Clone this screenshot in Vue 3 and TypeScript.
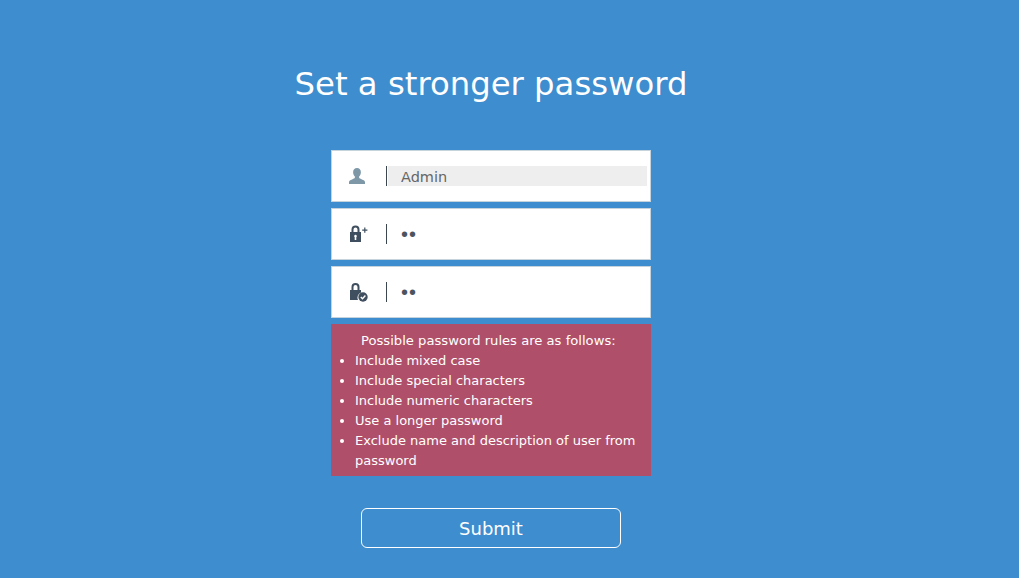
<script setup lang="ts">
const rules: string[] = [
  'Include mixed case',
  'Include special characters',
  'Include numeric characters',
  'Use a longer password',
  'Exclude name and description of user from password',
]
</script>

<template>
  <main class="page">
    <h1 class="title">Set a stronger password</h1>
    <form class="form" @submit.prevent>
      <div class="row">
        <span class="icon">
          <svg width="20" height="20" viewBox="0 0 20 20">
            <path fill="#7f98a8" d="M8 2c2.500 0 3.900 1.800 3.900 4.200 0 1.800-.8 3.400-1.800 4.300v1.100c0 .7 1.100 1.200 2.800 1.800 1.800.6 3.100 1.200 3.100 2.600v2H0v-2c0-1.400 1.300-2 3.100-2.600 1.700-.6 2.800-1.100 2.800-1.800v-1.100c-1-.9-1.800-2.500-1.800-4.300C4.100 3.800 5.500 2 8 2z"/>
          </svg>
        </span>
        <span class="sep"></span>
        <input class="field readonly" value="Admin" readonly />
      </div>
      <div class="row">
        <span class="icon">
          <svg width="20" height="20" viewBox="0 0 20 20">
            <path fill="none" stroke="#3f4f5f" stroke-width="2" d="M3.500 9V5.500a3 3 0 0 1 6 0V9"/>
            <path fill="#3f4f5f" fill-rule="evenodd" d="M1 8h11v10H1zM6.500 10.800a1.400 1.400 0 0 0-.8 2.500V16h1.600v-2.700a1.400 1.400 0 0 0-.8-2.500z"/>
            <path fill="#3f4f5f" d="M15.200 3.500h1.200v2h2v1.200h-2v2h-1.200v-2h-2V5.500h2z"/>
          </svg>
        </span>
        <span class="sep"></span>
        <input class="field secret" type="password" value="ab" />
      </div>
      <div class="row">
        <span class="icon">
          <svg width="20" height="20" viewBox="0 0 20 20">
            <path fill="none" stroke="#3f4f5f" stroke-width="2" d="M3.500 8V5a3 3 0 0 1 6 0v3"/>
            <path fill="#3f4f5f" d="M1 8h11v2.500a5.500 5.500 0 0 0-3 7.500H1z"/>
            <circle cx="14" cy="15" r="4.700" fill="#3f4f5f"/>
            <path fill="none" stroke="#fff" stroke-width="1.400" d="M11.800 15l1.700 1.700 2.900-3.100"/>
          </svg>
        </span>
        <span class="sep"></span>
        <input class="field secret" type="password" value="ab" />
      </div>
      <section class="alert">
        <p class="alert-head">Possible password rules are as follows:</p>
        <ul class="rules">
          <li v-for="rule in rules" :key="rule">{{ rule }}</li>
        </ul>
      </section>
      <button class="submit" type="submit">Submit</button>
    </form>
  </main>
</template>

<style>
html, body { margin: 0; background: #3d8dcf; }
</style>

<style scoped>
.page {
  width: 1019px;
  height: 578px;
  overflow: hidden;
  background: #3d8dcf;
  font-family: "DejaVu Sans", Verdana, sans-serif;
  color: #fff;
  display: flex;
  flex-direction: column;
  align-items: center;
  box-sizing: border-box;
  padding-top: 64px;
}
.title {
  margin: 0 37px 0 0;
  height: 86px;
  font-size: 32.300px;
  line-height: 40px;
  font-weight: 400;
  white-space: nowrap;
}
.form {
  width: 320px;
  margin-right: 37px;
  display: flex;
  flex-direction: column;
  gap: 6px;
}
.row {
  height: 52px;
  box-sizing: border-box;
  background: #fff;
  border: 1px solid #c6d2dc;
  display: flex;
  align-items: center;
}
.icon {
  width: 54px;
  display: flex;
  justify-content: center;
  flex: none;
}
.sep {
  width: 1px;
  height: 20px;
  background: #3a4650;
  flex: none;
}
.field {
  border: 0;
  outline: 0;
  box-sizing: border-box;
  margin-left: 1px;
  padding: 1px 0 0 13px;
  height: 20px;
  width: 259px;
  flex: none;
  font: 14.500px "DejaVu Sans", Verdana, sans-serif;
  color: #666;
  background: #fff;
}
.readonly { background: #eee; }
.secret {
  font: 20px "Liberation Sans", Arial, sans-serif;
  letter-spacing: 1px;
  color: #4a5560;
  padding: 0 0 0 13px;
}
.alert {
  background: #b04f69;
  height: 152px;
  box-sizing: border-box;
  font-size: 13px;
  line-height: 20px;
  padding: 7px 8px 0 0;
}
.alert-head { margin: 0; padding-left: 30px; font-size: 13.150px; }
.rules { margin: 0; padding: 0 0 0 24px; }
.submit {
  margin: 26px 0 0 30px;
  width: 260px;
  height: 40px;
  background: transparent;
  border: 1px solid #fff;
  border-radius: 6px;
  color: #fff;
  font: 18px "DejaVu Sans", Verdana, sans-serif;
  cursor: pointer;
}
</style>
